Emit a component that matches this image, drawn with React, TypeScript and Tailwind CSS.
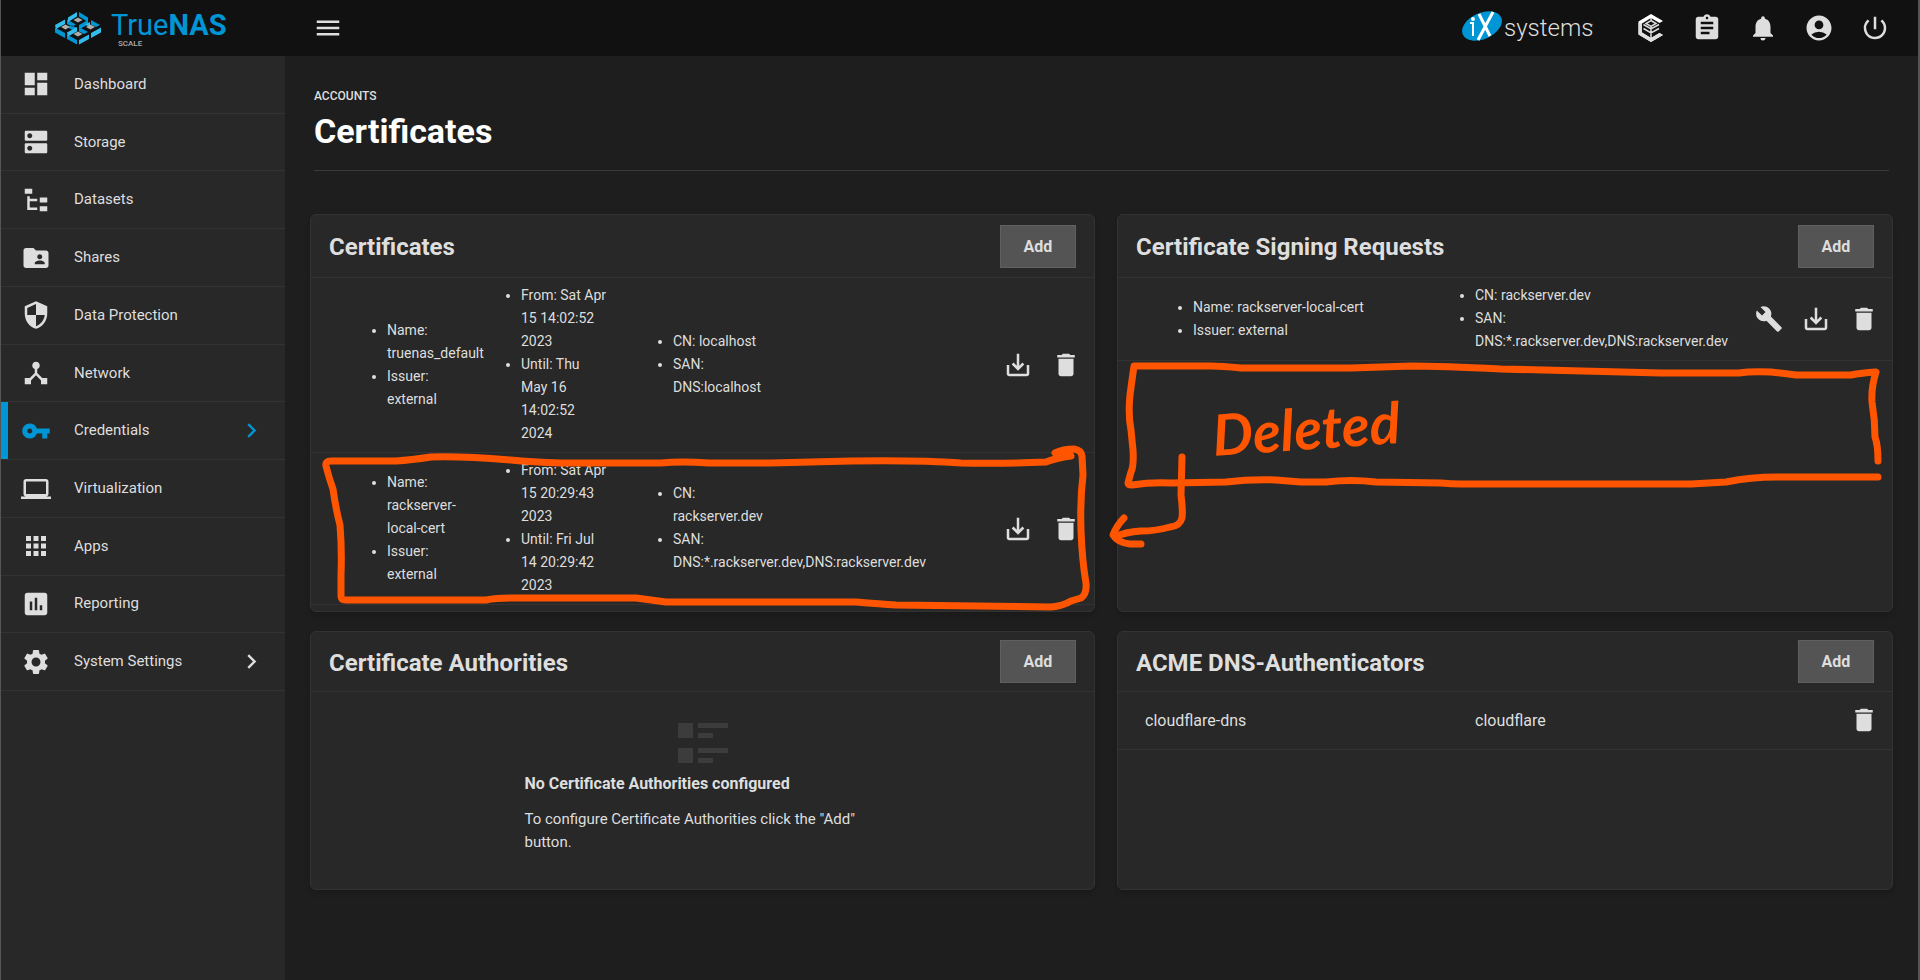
import type { ReactNode } from 'react';
import type { IconType } from 'react-icons';
import {
  MdAccountCircle,
  MdApps,
  MdAssignment,
  MdBuild,
  MdChevronRight,
  MdComputer,
  MdDashboard,
  MdDelete,
  MdDeviceHub,
  MdDns,
  MdFolderShared,
  MdInsertChart,
  MdMenu,
  MdNotifications,
  MdPowerSettingsNew,
  MdSaveAlt,
  MdSecurity,
  MdSettings,
  MdVpnKey,
} from 'react-icons/md';

type IconProps = { size?: number | string };

function FileTreeIcon({ size }: IconProps) {
  return (
    <svg width={size} height={size} viewBox="0 0 24 24" fill="currentColor">
      <path d="M3 3h6v4H3V3m12 7h6v4h-6v-4m0 7h6v4h-6v-4m-2-4H7v5h6v2H5V9h2v2h6v2z" />
    </svg>
  );
}

function TrueCommandIcon() {
  return (
    <svg width="30" height="30" viewBox="0 0 30 30">
      <path
        fill="#fff"
        d="M15 1l12 7-3.500 2L15 5 6 10.500v9L15 25l8.500-5 3.500 2-12 7-12.500-7.500v-13z"
      />
      <path fill="#dedede" d="M2.500 10L6 10.500v9L15 25v4L2.500 21.500zM15 25l8.500-5 3.500 2-12 7z" />
      <path
        fill="none"
        stroke="#dedede"
        strokeWidth="1.500"
        d="M15 7.500l5 3-5 3-5-3zM7.500 11.500L15 16l8-4.500M7.500 15.500L15 20l8-4.500M15 14v11M15 5v3"
      />
    </svg>
  );
}

function TrueNasLogo() {
  return (
    <a href="#dashboard" className="flex items-center gap-[9px]" aria-label="TrueNAS SCALE">
      <svg width="48" height="34" viewBox="0 0 48 34">
        <g fill="#0095d5">
          <path d="M25 1l9 5.500v4.500l-9-5.500zM13 8.500l9 5-4 2-5-2.500zM1 16.500l10 5.500v5L1 21.500zM13 23.500l10 5.500v4.500L13 28zM37 9l9 5-4 2-5-2.500zM25 16l9 5-4 2-5-2.500zM13 16l9 5v-4.500l-4-2z" />
          <path d="M25 14l9-5v4.500l-9 5z" />
        </g>
        <g fill="#31beec">
          <path d="M23 1v4.500L14 11V6.500zM11 8.500V13l-9 5-1-4zM35 15.500l-4-2 5-2.500v4.500zM47 16.500v5L37 27v-5zM35 23.500V28l-10 5.500V29zM23 16v4.500l-9 5-1-4z" />
        </g>
        <g fill="#aeadae">
          <path d="M24 6.500l4.500 2.500-4.500 2.500L19.500 9zM11.500 13.500L16 16l-4.500 2.500L7 16zM36.500 13.500L41 16l-4.500 2.500L32 16zM24 20.500l4.500 2.500-4.500 2.500-4.500-2.500z" />
        </g>
      </svg>
      <span className="flex flex-col pt-[2px] text-[#0095d5]">
        <span className="text-[29px] leading-[30px]">
          True<span className="font-bold">NAS</span>
        </span>
        <span className="pl-[7px] text-[8px] leading-[8px] font-medium text-[#aeadae]">SCALE</span>
      </span>
    </a>
  );
}

function IxLogo() {
  return (
    <svg width="136" height="36" viewBox="0 0 136 36" role="img" aria-label="iXsystems">
      <ellipse cx="21" cy="16" rx="21" ry="13" fill="#0095d5" transform="rotate(-24 21 16)" />
      <path d="M18 4L29 26M32 2L17 30" stroke="#fff" strokeWidth="3" fill="none" />
      <path d="M9 13h3v13" stroke="#fff" strokeWidth="2" fill="none" />
      <circle cx="12" cy="9" r="2" fill="#fff" />
      <text x="43" y="26" fontSize="24" fontWeight="300" fill="#dedede" className="font-['Roboto',sans-serif]">
        systems
      </text>
      <text x="129" y="17" fontSize="5" fill="#dedede" className="font-['Roboto',sans-serif]">
        ™
      </text>
    </svg>
  );
}

type NavItem = {
  label: string;
  icon: IconType | typeof FileTreeIcon;
  active?: boolean;
  expandable?: boolean;
};

const navItems: NavItem[] = [
  { label: 'Dashboard', icon: MdDashboard },
  { label: 'Storage', icon: MdDns },
  { label: 'Datasets', icon: FileTreeIcon },
  { label: 'Shares', icon: MdFolderShared },
  { label: 'Data Protection', icon: MdSecurity },
  { label: 'Network', icon: MdDeviceHub },
  { label: 'Credentials', icon: MdVpnKey, active: true, expandable: true },
  { label: 'Virtualization', icon: MdComputer },
  { label: 'Apps', icon: MdApps },
  { label: 'Reporting', icon: MdInsertChart },
  { label: 'System Settings', icon: MdSettings, expandable: true },
];

const topActions = [
  { label: 'Jobs', icon: MdAssignment },
  { label: 'Alerts', icon: MdNotifications },
  { label: 'Account', icon: MdAccountCircle },
  { label: 'Power', icon: MdPowerSettingsNew },
];

function TopBar() {
  return (
    <header className="flex h-14 items-center bg-[#111111]">
      <div className="flex w-[284px] shrink-0 items-center pl-[53px]">
        <TrueNasLogo />
      </div>
      <button aria-label="Toggle menu" className="ml-[28px]">
        <MdMenu size={30} />
      </button>
      <div className="ml-auto flex items-center pr-[15px]">
        <IxLogo />
        <button aria-label="TrueCommand" className="ml-[26px] flex w-14 justify-center">
          <TrueCommandIcon />
        </button>
        {topActions.map(({ label, icon: Icon }) => (
          <button key={label} aria-label={label} className="flex w-14 justify-center">
            <Icon size={30} />
          </button>
        ))}
      </div>
    </header>
  );
}

function Sidebar() {
  return (
    <nav className="w-[284px] shrink-0 bg-[#282828]">
      <ul className="flex min-h-[635px] flex-col">
        {navItems.map(({ label, icon: Icon, active, expandable }) => (
          <li key={label} className="flex flex-1 border-b border-[#333333]">
            <a
              href="#"
              className={
                active
                  ? 'flex flex-1 items-center border-l-[7px] border-[#0095d5] pr-[19px]'
                  : 'flex flex-1 items-center border-l-[7px] border-transparent pr-[19px]'
              }
            >
              <span className={active ? 'ml-[13px] text-[#0095d5]' : 'ml-[13px]'}>
                <Icon size={30} />
              </span>
              <span className="ml-[23px] flex-1">{label}</span>
              {expandable && (
                <span className={active ? 'text-[#0095d5]' : ''}>
                  <MdChevronRight size={29} />
                </span>
              )}
            </a>
          </li>
        ))}
      </ul>
    </nav>
  );
}

function Card({ title, compact, children }: { title: string; compact?: boolean; children: ReactNode }) {
  return (
    <section className="rounded-md border border-[#333333] bg-[#282828] shadow-md">
      <div
        className={`flex items-center justify-between border-b border-[#333333] px-[18px] ${
          compact ? 'h-[60px]' : 'h-[63px]'
        }`}
      >
        <h2 className="pt-[2px] text-[24px] leading-8 font-bold">{title}</h2>
        <button className="h-[43px] w-[76px] border border-[#606060] bg-[#545454] text-[16px] font-bold">
          Add
        </button>
      </div>
      {children}
    </section>
  );
}

function Bullets({ items, className }: { items: string[]; className: string }) {
  return (
    <ul className={`list-disc text-[14px] leading-[23px] ${className}`}>
      {items.map((item) => (
        <li key={item}>{item}</li>
      ))}
    </ul>
  );
}

function Actions({ wrench }: { wrench?: boolean }) {
  return (
    <div className="flex justify-end gap-[18px] pr-[13px]">
      {wrench && (
        <button aria-label="Create ACME certificate">
          <MdBuild size={28} />
        </button>
      )}
      <button aria-label="Download">
        <MdSaveAlt size={30} />
      </button>
      <button aria-label="Delete">
        <MdDelete size={30} />
      </button>
    </div>
  );
}

const certificates = [
  {
    name: ['Name: truenas_default', 'Issuer: external'],
    dates: ['From: Sat Apr 15 14:02:52 2023', 'Until: Thu May 16 14:02:52 2024'],
    san: ['CN: localhost', 'SAN: DNS:localhost'],
  },
  {
    name: ['Name: rackserver-local-cert', 'Issuer: external'],
    dates: ['From: Sat Apr 15 20:29:43 2023', 'Until: Fri Jul 14 20:29:42 2023'],
    san: ['CN: rackserver.dev', 'SAN: DNS:*.rackserver.dev,DNS:rackserver.dev'],
  },
];

function CertificatesTable() {
  return (
    <table className="w-full table-fixed">
      <colgroup>
        <col className="w-[164px]" />
        <col className="w-[134px]" />
        <col />
        <col className="w-[120px]" />
      </colgroup>
      <tbody>
        {certificates.map(({ name, dates, san }) => (
          <tr key={name[0]} className="border-b border-[#333333]">
            <td className="pt-[6px] pb-[7px]">
              <Bullets items={name} className="ml-[76px]" />
            </td>
            <td className="pt-[6px] pb-[7px]">
              <Bullets items={dates} className="ml-[46px] w-[87px]" />
            </td>
            <td className="pt-[6px] pb-[7px]">
              <Bullets items={san} className="ml-[64px] w-[100px]" />
            </td>
            <td>
              <Actions />
            </td>
          </tr>
        ))}
      </tbody>
    </table>
  );
}

function SigningRequestsTable() {
  return (
    <table className="w-full table-fixed">
      <colgroup>
        <col className="w-[294px]" />
        <col />
        <col className="w-[150px]" />
      </colgroup>
      <tbody>
        <tr className="border-b border-[#333333]">
          <td className="pt-[6px] pb-[7px]">
            <Bullets items={['Name: rackserver-local-cert', 'Issuer: external']} className="ml-[75px]" />
          </td>
          <td className="pt-[6px] pb-[7px]">
            <Bullets
              items={['CN: rackserver.dev', 'SAN: DNS:*.rackserver.dev,DNS:rackserver.dev']}
              className="ml-[63px] w-[262px]"
            />
          </td>
          <td>
            <Actions wrench />
          </td>
        </tr>
      </tbody>
    </table>
  );
}

function EmptyState() {
  return (
    <div className="mx-auto flex w-[356px] flex-col pt-[31px] pb-[35px]">
      <svg width="50" height="41" viewBox="0 0 50 41" fill="#3c3c3c" className="mx-auto">
        <path d="M0 0h15v15H0zM20 0h30v5H20zM20 10h15v5H20zM0 25h15v15H0zM20 25h30v5H20zM20 35h15v5H20z" />
      </svg>
      <h3 className="mt-2 text-[16px] leading-6 font-bold">No Certificate Authorities configured</h3>
      <p className="mt-3">To configure Certificate Authorities click the "Add" button.</p>
    </div>
  );
}

// Freehand marker notes on top of the page
function MarkerNotes() {
  return (
    <svg
      width="1920"
      height="980"
      viewBox="0 0 1920 980"
      className="pointer-events-none absolute top-0 left-0"
    >
      <g fill="none" stroke="#ff5500" strokeWidth="7" strokeLinecap="round" strokeLinejoin="round">
        <path d="M1070 456Q1055 458 1045 462Q1000 464 960 463Q920 460 850 461L770 463L708 463Q680 461 660 463H560Q530 462 510 460Q460 456 430 457Q410 460 395 461L330 461Q324 461 325 466Q328 478 332 489Q335 510 339 525Q341 550 340 575V596Q340 600 345 600H485Q495 598 510 598L635 598Q650 600 665 602H855Q880 604 895 605L1050 607Q1062 606 1070 601L1080 598Q1086 594 1085 583Q1081 560 1080 530Q1079 500 1082 475L1081 456Q1080 450 1073 449Q1062 449 1054 453" />
        <path d="M1877 461Q1877 445 1874 437Q1874 420 1871 402Q1870 388 1875 372Q1860 373 1850 375H1795Q1780 373 1770 372Q1750 371 1738 373H1660L1500 369Q1440 366 1410 366L1350 368H1240Q1220 366 1210 366H1133Q1131 380 1129 395Q1127 415 1130 430L1132 450Q1133 466 1130 472L1127 483Q1127 485 1131 485Q1150 482 1170 483L1225 482Q1250 479 1275 480L1300 482H1325Q1350 479 1375 482L1440 483Q1450 484 1460 484H1690L1725 482Q1750 477 1775 477H1877" />
        <path d="M1181 457L1180 495Q1182 510 1181 518Q1179 526 1169 527Q1155 531 1140 531Q1124 532 1114 537" />
        <path d="M1123 518Q1116 525 1112 535Q1117 543 1129 544H1140" />
      </g>
      <text
        x="1213"
        y="456"
        fontSize="57"
        fontWeight="700"
        fontStyle="italic"
        fill="#ff5500"
        transform="rotate(-4 1213 456)"
        className="font-['Lato',sans-serif]"
      >
        Deleted
      </text>
    </svg>
  );
}

export default function App() {
  return (
    <div className="relative flex min-h-screen flex-col border-r-2 border-l border-[#555555] bg-[#1e1e1e] font-['Roboto',sans-serif] text-[15px] leading-[23px] text-[#dedede]">
      <TopBar />
      <div className="flex flex-1">
        <Sidebar />
        <main className="min-w-0 flex-1 pt-[29px] pr-[25px] pb-6 pl-[25px]">
          <div className="mx-1 border-b border-[#3a3a3a] pb-[19px]">
            <p className="text-[12px] leading-[23px] font-medium">ACCOUNTS</p>
            <h1 className="mt-[3px] text-[34px] leading-10 font-bold text-white">Certificates</h1>
          </div>
          <div className="mt-[43px] grid grid-cols-[785fr_776fr] gap-x-[22px] gap-y-[19px]">
            <Card title="Certificates">
              <CertificatesTable />
              <div className="h-[6px]" />
            </Card>
            <Card title="Certificate Signing Requests">
              <SigningRequestsTable />
            </Card>
            <Card title="Certificate Authorities" compact>
              <EmptyState />
            </Card>
            <Card title="ACME DNS-Authenticators" compact>
              <table className="w-full table-fixed">
                <tbody>
                  <tr className="h-[57px] border-b border-[#333333] text-[16px]">
                    <td className="w-[330px] pl-[27px]">cloudflare-dns</td>
                    <td className="pl-[27px]">cloudflare</td>
                    <td className="w-[120px]">
                      <div className="flex justify-end pr-[13px]">
                        <button aria-label="Delete cloudflare-dns">
                          <MdDelete size={30} />
                        </button>
                      </div>
                    </td>
                  </tr>
                </tbody>
              </table>
            </Card>
          </div>
        </main>
      </div>
      <MarkerNotes />
    </div>
  );
}
